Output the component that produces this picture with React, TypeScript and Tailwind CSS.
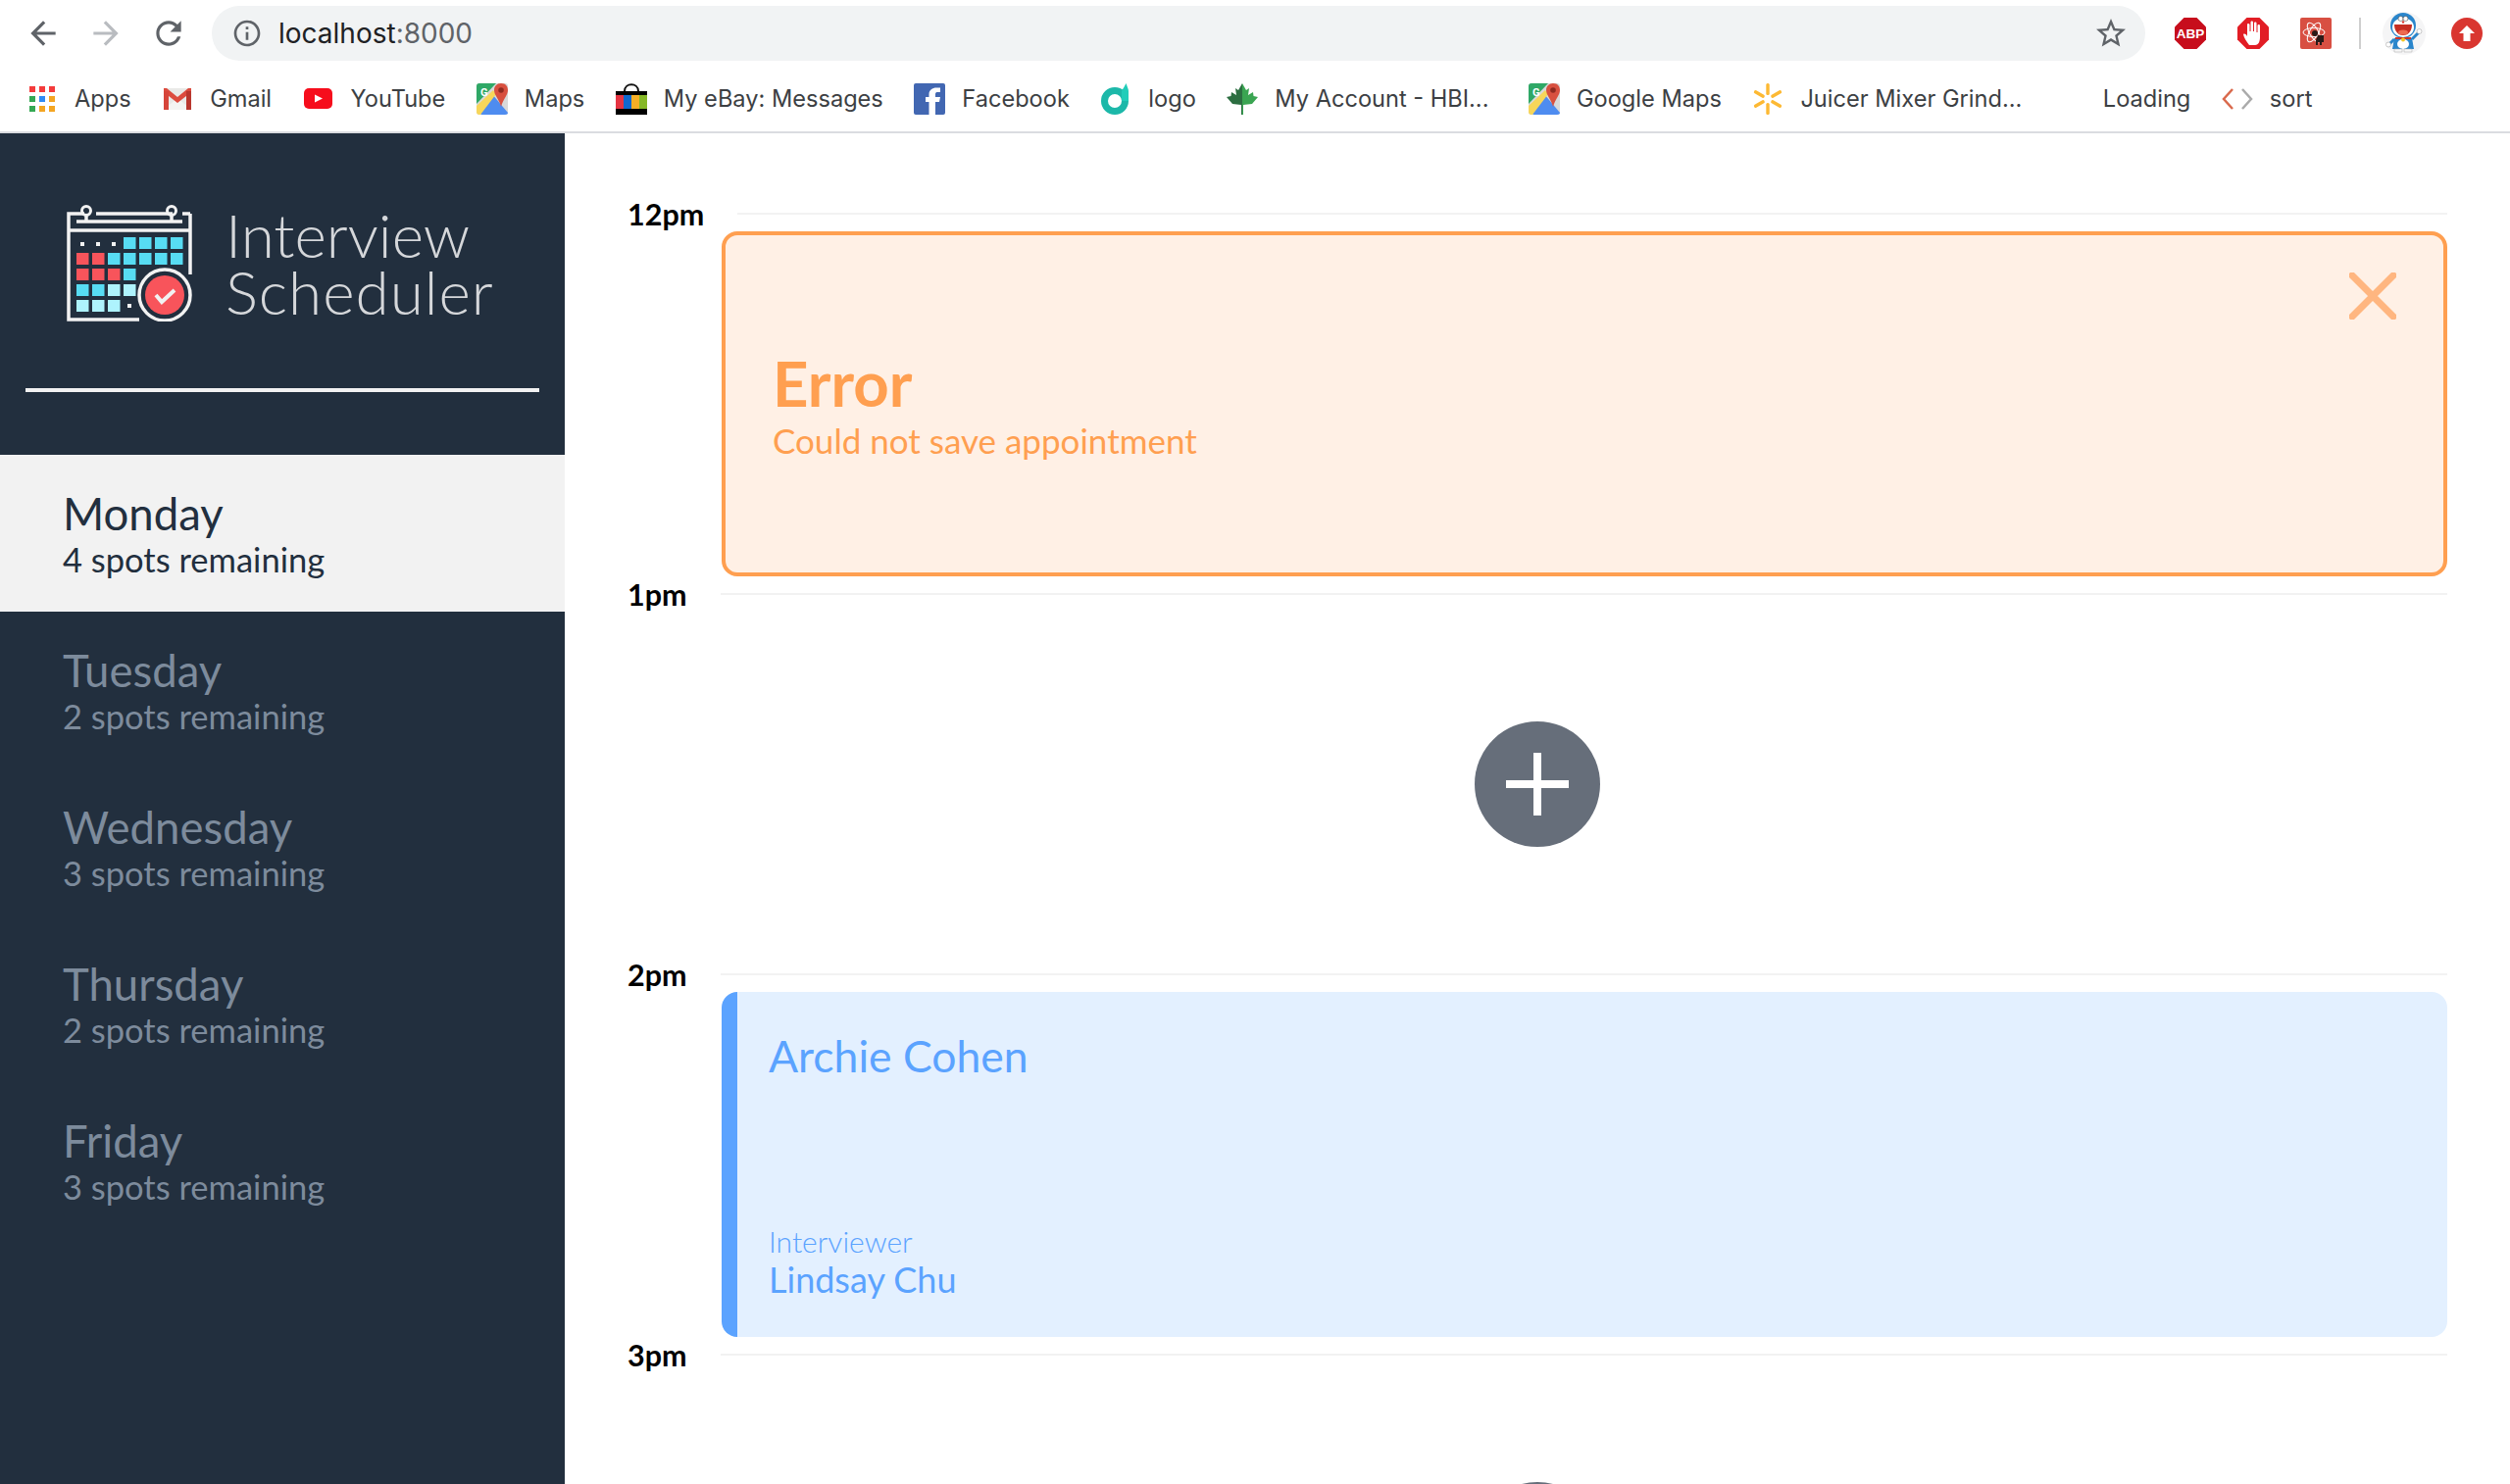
import React from "react";

const font = "font-['Lato','Liberation_Sans',sans-serif]";

const Apps = () => (
  <svg width="32" height="32" viewBox="0 0 32 32">
    {["#f43b3b", "#f43b3b", "#f43b3b", "#34a853", "#2f8bf5", "#f4a522", "#34a853", "#f4a522", "#f4a522"].map((c, i) => (
      <rect key={i} x={(i % 3) * 10 + 3} y={Math.floor(i / 3) * 10 + 3} width="6" height="6" fill={c} />
    ))}
  </svg>
);

const Gmail = () => (
  <svg width="32" height="32" viewBox="0 0 32 32">
    <rect x="2" y="5" width="28" height="22" fill="#e9e9e7" />
    <path d="M2 27 L16 15 L30 27 Z" fill="#f4f4f2" />
    <path d="M2 5 H5 L16 14 L27 5 H30 V9 L16 20 L2 9 Z" fill="#dc4b3e" />
    <rect x="2" y="8" width="5" height="19" fill="#d6453a" />
    <rect x="25" y="8" width="5" height="19" fill="#b9372e" />
  </svg>
);

const YouTube = () => (
  <svg width="32" height="32" viewBox="0 0 32 32">
    <rect x="1" y="5" width="29" height="21" rx="5" fill="#f60d1c" />
    <path d="M12 11.500 L20 15.500 L12 19.500 Z" fill="#fff" />
  </svg>
);

const MapsIcon = () => (
  <svg width="32" height="32" viewBox="0 0 32 32">
    <rect width="32" height="32" rx="3" fill="#d9d9d9" />
    <path d="M3 0 H20 L0 21 V3 C0 1 1 0 3 0 Z" fill="#2fa866" />
    <path d="M0 27 L16 11 L32 30 C32 31 31 32 29 32 H5 Z" fill="#4e8cf0" />
    <path d="M0 23 L17 7 L20 11 L4 32 H3 C1 32 0 31 0 29 Z" fill="#f7d65a" />
    <path d="M25 0 C30 0 32 3.500 32 7 C32 12 27 16 25 24 C23 16 18 12 18 7 C18 3 21 0 25 0 Z" fill="#d8503f" />
    <circle cx="25" cy="7" r="2.800" fill="#8f2a20" />
    <text x="4" y="13" fontSize="11" fontWeight="700" fill="#fff" fontFamily="Roboto">G</text>
  </svg>
);

const Ebay = () => (
  <svg width="32" height="32" viewBox="0 0 32 32">
    <path d="M9 8 C9 -1 23 -1 23 8" fill="none" stroke="#111" strokeWidth="2" />
    <rect x="0" y="8" width="32" height="24" fill="#000" />
    <rect x="0" y="12" width="8" height="14" fill="#e53442" />
    <rect x="8" y="12" width="8" height="14" fill="#0f68cf" />
    <rect x="16" y="12" width="8" height="14" fill="#f5af26" />
    <rect x="24" y="12" width="8" height="14" fill="#86b827" />
  </svg>
);

const Facebook = () => (
  <svg width="32" height="32" viewBox="0 0 32 32">
    <rect width="32" height="32" rx="2" fill="#4267b2" />
    <path d="M22 32 V19 H26 L27 14 H22 V11 C22 9.500 23 9 24 9 H27 V4.500 H23 C19 4.500 15.500 7 15.500 11 V14 H12 V19 H15.500 V32 Z" fill="#fff" />
  </svg>
);

const LogoRing = () => (
  <svg width="32" height="32" viewBox="0 0 32 32">
    <circle cx="15" cy="18" r="10.500" fill="none" stroke="#1cb8a9" strokeWidth="7" />
    <path d="M22 18 V8 C23 6 25 3 26.500 0 C27.500 3 29 6 29 8 V18 Z" fill="#20cdb9" />
  </svg>
);

const Maple = () => (
  <svg width="32" height="32" viewBox="0 0 32 32">
    <path d="M16 0 L12 7 L9 5 L10 12 L5 9 L4.500 13 L0 14 L6 21 L15 22 V32 H16 Z" fill="#2c6e41" />
    <path d="M16 0 L20 7 L23 5 L22 12 L27 9 L27.500 13 L32 14 L26 21 L17 22 V32 H16 Z" fill="#3aa552" />
  </svg>
);

const Walmart = () => (
  <svg width="32" height="32" viewBox="0 0 32 32" fill="#fdb933">
    {[0, 60, 120, 180, 240, 300].map((a) => (
      <rect key={a} x="14.300" y="0" width="3.400" height="12" rx="1.500" transform={`rotate(${a} 16 16)`} />
    ))}
  </svg>
);

const Sort = () => (
  <svg width="32" height="32" viewBox="0 0 32 32" fill="none" strokeWidth="2.500">
    <path d="M11 6 L2 16 L11 26" stroke="#d9694c" />
    <path d="M21 6 L30 16 L21 26" stroke="#aaa" />
  </svg>
);

const Bookmark = ({ icon, label, className = "" }: { icon?: React.ReactNode; label: string; className?: string }) => (
  <div className={`flex items-center gap-[17px] ${className}`}>
    {icon}
    <span className="whitespace-nowrap text-[23.600px] leading-none text-[#3c4043]">{label}</span>
  </div>
);

const Chrome = () => (
  <header className="h-[136px] shrink-0 border-b-2 border-[#dadce0] bg-white font-['Inter',sans-serif]">
    <div className="flex h-[68px] items-start pt-[6px]">
      <div className="flex h-[56px] w-[216px] shrink-0 items-center gap-[26px] pl-[25px]">
        <svg width="38" height="38" viewBox="0 0 24 24" fill="#5f6368"><path d="M20 11H7.830l5.590-5.590L12 4l-8 8 8 8 1.410-1.410L7.830 13H20v-2z" /></svg>
        <svg width="38" height="38" viewBox="0 0 24 24" fill="#b9bcc0"><path d="M4 11h12.170l-5.590-5.590L12 4l8 8-8 8-1.410-1.410L16.170 13H4v-2z" /></svg>
        <svg width="38" height="38" viewBox="0 0 24 24" fill="#5f6368"><path d="M17.650 6.350C16.200 4.900 14.210 4 12 4c-4.420 0-7.990 3.580-7.990 8s3.570 8 7.990 8c3.730 0 6.840-2.550 7.730-6h-2.080c-.82 2.330-3.040 4-5.650 4-3.310 0-6-2.690-6-6s2.690-6 6-6c1.660 0 3.140.69 4.220 1.780L13 11h7V4l-2.350 2.350z" /></svg>
      </div>
      <div className="flex h-[56px] w-[1972px] shrink-0 items-center rounded-full bg-[#f1f3f4] pl-[20px] pr-[17px]">
        <svg width="32" height="32" viewBox="0 0 24 24" fill="#5f6368"><path d="M11 7h2v2h-2zm0 4h2v6h-2zm1-9C6.480 2 2 6.480 2 12s4.480 10 10 10 10-4.480 10-10S17.520 2 12 2zm0 18c-4.410 0-8-3.590-8-8s3.590-8 8-8 8 3.590 8 8-3.590 8-8 8z" /></svg>
        <span className="ml-[16px] text-[28px] leading-none text-[#202124]">localhost<span className="text-[#5f6368]">:8000</span></span>
        <svg className="ml-auto" width="36" height="36" viewBox="0 0 24 24" fill="#5f6368"><path d="M22 9.240l-7.190-.62L12 2 9.190 8.630 2 9.240l5.460 4.730L5.820 21 12 17.270 18.180 21l-1.630-7.030L22 9.240zM12 15.400l-3.760 2.270 1-4.280-3.320-2.880 4.380-.38L12 6.100l1.710 4.040 4.380.38-3.320 2.880 1 4.280L12 15.400z" /></svg>
      </div>
      <div className="flex h-[56px] items-center pl-[30px]">
        <svg width="32" height="32" viewBox="0 0 32 32">
          <path d="M9.500 0 H22.500 L32 9.500 V22.500 L22.500 32 H9.500 L0 22.500 V9.500 Z" fill="#c70d1c" />
          <text x="16" y="20.500" textAnchor="middle" fontSize="13.500" fontWeight="700" fill="#fff" fontFamily="Liberation Sans">ABP</text>
        </svg>
        <svg className="ml-[32px]" width="32" height="32" viewBox="0 0 32 32">
          <path d="M9.500 0 H22.500 L32 9.500 V22.500 L22.500 32 H9.500 L0 22.500 V9.500 Z" fill="#e21d25" />
          <path d="M12 28 C9 24 6.500 20 6 17 C7 16 8.500 16.500 10 19 V7 C10 5.500 12 5.500 12.500 7 V14 H13.500 V4.500 C13.500 3 16 3 16 4.500 V14 H17 V5.500 C17 4 19.500 4 19.500 5.500 V15 H20.500 V8 C20.500 6.500 23 6.500 23 8 V20 C23 25 21 28 18 28 Z" fill="#fff" />
        </svg>
        <svg className="ml-[32px]" width="32" height="32" viewBox="0 0 32 32">
          <rect width="32" height="32" rx="2" fill="#d84f42" />
          <g fill="none" stroke="#fff" strokeWidth="1">
            <ellipse cx="14" cy="15" rx="11" ry="4.500" />
            <ellipse cx="14" cy="15" rx="11" ry="4.500" transform="rotate(60 14 15)" />
            <ellipse cx="14" cy="15" rx="11" ry="4.500" transform="rotate(-60 14 15)" />
          </g>
          <circle cx="15" cy="16" r="3" fill="#2a1a18" />
          <path d="M18 18 H24 V25 H22 V28 H20 V25 H18 V28 H16 V23 Z" fill="#2a1a18" />
        </svg>
        <div className="ml-[28px] h-[32px] w-[2px] bg-[#cfcfcf]" />
        <svg className="ml-[22px]" width="44" height="44" viewBox="0 0 44 44">
          <circle cx="22" cy="22" r="22" fill="#f5f5f6" />
          <circle cx="21" cy="14" r="13" fill="#2a86cc" />
          <ellipse cx="21" cy="16" rx="11" ry="10" fill="#fff" />
          <circle cx="18.500" cy="7" r="2.500" fill="#fff" stroke="#333" strokeWidth="0.500" />
          <circle cx="23.500" cy="7" r="2.500" fill="#fff" stroke="#333" strokeWidth="0.500" />
          <circle cx="21" cy="10.500" r="1.200" fill="#d8362b" />
          <path d="M12 13 H30 C30 21 25 24 21 24 C17 24 12 21 12 13 Z" fill="#c62d22" />
          <ellipse cx="21" cy="21" rx="5" ry="2.500" fill="#ee6a4f" />
          <path d="M12 27 H30 L32 38 H10 Z" fill="#2a86cc" />
          <ellipse cx="21" cy="33" rx="6" ry="5" fill="#fff" />
          <rect x="13" y="26" width="16" height="2" fill="#cf3529" />
          <circle cx="21" cy="28.500" r="2" fill="#f3c623" />
          <path d="M30 28 L37 21" stroke="#2a86cc" strokeWidth="3" />
          <circle cx="37.500" cy="20" r="2.500" fill="#fff" stroke="#999" strokeWidth="0.500" />
          <path d="M12 28 L7 33" stroke="#2a86cc" strokeWidth="3" />
          <circle cx="6" cy="33.500" r="2.500" fill="#fff" stroke="#999" strokeWidth="0.500" />
          <path d="M12 38 H20 V41 H12 Z M22 38 H30 V41 H22 Z" fill="#f8f8f8" stroke="#aaa" strokeWidth="0.500" />
        </svg>
        <svg className="ml-[26px]" width="32" height="32" viewBox="0 0 32 32">
          <circle cx="16" cy="16" r="16" fill="#d93630" />
          <path d="M16 8 L24 16 H19.500 V24 H12.500 V16 H8 Z" fill="#fff" />
        </svg>
      </div>
    </div>
    <div className="flex h-[66px] items-center gap-[31.500px] pl-[27px]">
      <Bookmark icon={<Apps />} label="Apps" />
      <Bookmark icon={<Gmail />} label="Gmail" />
      <Bookmark icon={<YouTube />} label="YouTube" />
      <Bookmark icon={<MapsIcon />} label="Maps" />
      <Bookmark icon={<Ebay />} label="My eBay: Messages" />
      <Bookmark icon={<Facebook />} label="Facebook" />
      <Bookmark icon={<LogoRing />} label="logo" />
      <Bookmark icon={<Maple />} label="My Account - HBI..." />
      <Bookmark icon={<MapsIcon />} label="Google Maps" className="ml-[9px]" />
      <Bookmark icon={<Walmart />} label="Juicer Mixer Grind..." />
      <Bookmark label="Loading" className="ml-[51px]" />
      <Bookmark icon={<Sort />} label="sort" />
    </div>
  </header>
);

const Logo = () => {
  const xs = [10, 26, 42, 58, 74, 90, 106];
  const ys = [34, 50, 66, 82, 98];
  const blue = "#57dcf3";
  const red = "#f8545b";
  const pale = "#aef3fd";
  const cells: [number, number, string][] = [
    [3, 0, blue], [4, 0, blue], [5, 0, blue], [6, 0, blue],
    [0, 1, red], [1, 1, red], [2, 1, blue], [3, 1, blue], [4, 1, blue], [5, 1, blue], [6, 1, blue],
    [0, 2, red], [1, 2, red], [2, 2, red], [3, 2, blue],
    [0, 3, blue], [1, 3, blue], [2, 3, pale], [3, 3, pale],
    [0, 4, pale], [1, 4, pale], [2, 4, pale],
  ];
  return (
    <svg width="128" height="120" viewBox="0 0 128 120" className="shrink-0">
      <g fill="none" stroke="#f2f2f2" strokeWidth="3.500">
        <path d="M74 118 H2 V10 H18 M2 27 H126 M126 10 V72 M118 10 H126 M30 10 H108" />
        <path d="M10 18 H118" />
        <circle cx="20" cy="7" r="4.500" strokeWidth="3" />
        <circle cx="107" cy="7" r="4.500" strokeWidth="3" />
        <path d="M20 11 V17 M107 11 V17" />
        <circle cx="100" cy="93" r="26" />
      </g>
      {cells.map(([c, r, f]) => (
        <rect key={`${c}-${r}`} x={xs[c]} y={ys[r]} width="12.500" height="12" fill={f} />
      ))}
      <rect x="14" y="39" width="4" height="4" fill="#f2f2f2" />
      <rect x="30" y="39" width="4" height="4" fill="#f2f2f2" />
      <rect x="46" y="39" width="4" height="4" fill="#f2f2f2" />
      <rect x="62" y="102" width="4" height="4" fill="#f2f2f2" />
      <circle cx="100" cy="93" r="20" fill="#f8545b" />
      <path d="M91 93 L97 100 L110 88" fill="none" stroke="#f2f2f2" strokeWidth="4" />
    </svg>
  );
};

const days = [
  { name: "Monday", spots: "4 spots remaining", selected: true },
  { name: "Tuesday", spots: "2 spots remaining" },
  { name: "Wednesday", spots: "3 spots remaining" },
  { name: "Thursday", spots: "2 spots remaining" },
  { name: "Friday", spots: "3 spots remaining" },
];

const Sidebar = () => (
  <aside className="w-[576px] shrink-0 bg-[#222f3e]">
    <div className="mt-[72px] flex h-[120px] items-center pl-[68px]">
      <Logo />
      <div className="ml-[34px] text-[62px] font-light leading-[58px] text-[#d5d7da]">
        <div>Interview</div>
        <div className="tracking-[1px]">Scheduler</div>
      </div>
    </div>
    <div className="mx-[26px] mb-[64px] mt-[68px] h-[4px] bg-[#f2f2f2]" />
    <ul>
      {days.map((d) => (
        <li
          key={d.name}
          className={`flex h-[160px] flex-col justify-center pb-[2px] pl-[64px] ${d.selected ? "bg-[#f2f2f2] text-[#222f3e]" : "text-[#7d8b9c]"}`}
        >
          <h2 className="mt-[1px] text-[45.500px] font-normal leading-[55px]">{d.name}</h2>
          <p className="text-[34.500px] font-normal leading-[40px]">{d.spots}</p>
        </li>
      ))}
    </ul>
  </aside>
);

const TimeLine = ({ time }: { time: string }) => (
  <div className="flex h-[2px] items-center">
    <span className="mr-[34px] text-[30.500px] font-bold leading-none text-black">{time}</span>
    <div className="h-[2px] flex-1 bg-[#f2f2f2]" />
  </div>
);

const AddButton = () => (
  <div className="my-[17px] flex h-[352px] items-center justify-center">
    <div className="relative flex h-[128px] w-[128px] items-center justify-center rounded-full bg-[#666e7a]">
      <div className="absolute h-[8px] w-[64px] bg-white" />
      <div className="absolute h-[64px] w-[8px] bg-white" />
    </div>
  </div>
);

const Schedule = () => (
  <main className="flex-1 px-[64px] pt-[81px]">
    <TimeLine time="12pm" />
    <div className="relative my-[17px] ml-[96px] flex h-[352px] flex-col justify-center rounded-[16px] border-4 border-[#ff9f50] bg-[#fff0e5] pl-[48px] text-[#ff9f50]">
      <h2 className="text-[63.500px] font-bold leading-[73px]">Error</h2>
      <p className="text-[35px] font-normal leading-[44px]">Could not save appointment</p>
      <svg className="absolute right-[48px] top-[38px]" width="48" height="48" viewBox="0 0 48 48" fill="none" stroke="#ffb680" strokeWidth="7" strokeLinecap="round">
        <path d="M3 3 L45 45 M45 3 L3 45" />
      </svg>
    </div>
    <TimeLine time="1pm" />
    <AddButton />
    <TimeLine time="2pm" />
    <div className="my-[17px] ml-[96px] flex h-[352px] flex-col rounded-[16px] border-l-[16px] border-[#5ba3ff] bg-[#e3f0ff] pl-[32px] text-[#5ba3ff]">
      <h2 className="mt-[35px] text-[44.500px] leading-[60px]">Archie Cohen</h2>
      <div className="mb-[39px] mt-auto">
        <p className="text-[30px] font-light leading-[38px]">Interviewer</p>
        <p className="text-[36px] leading-[40px]">Lindsay Chu</p>
      </div>
    </div>
    <TimeLine time="3pm" />
    <AddButton />
  </main>
);

export default function App() {
  return (
    <div className={`flex h-[1514px] flex-col overflow-hidden bg-white ${font}`}>
      <Chrome />
      <div className="flex min-h-0 flex-1">
        <Sidebar />
        <Schedule />
      </div>
    </div>
  );
}
